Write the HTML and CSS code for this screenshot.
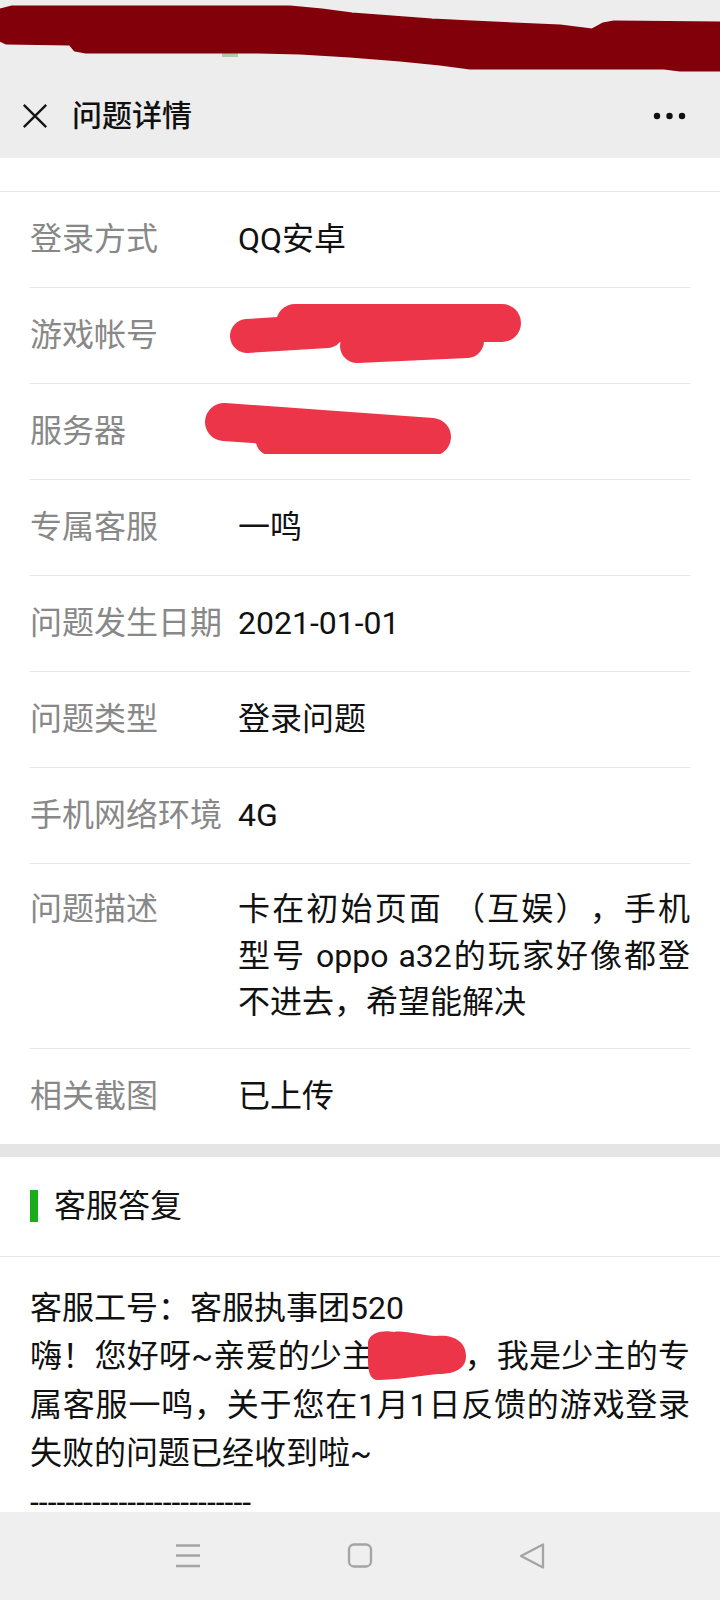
FILE: index.html
```html
<!DOCTYPE html>
<html lang="zh-CN">
<head>
<meta charset="utf-8">
<title>问题详情</title>
<link rel="stylesheet" href="styles.css">
</head>
<body>
<div class="statusbar">
  <svg class="scribble" viewBox="0 0 720 74" width="720" height="74">
    <rect x="222" y="46" width="16" height="11" fill="#a9cda9"/>
    <path d="M0 10 L12 7 L290 7 L322 10 L352 14 L432 20 L472 22 L560 26 L592 30 L603 24 L614 22 L720 23 L720 70 L680 70 L664 68 L470 68 L440 64 L400 60 L350 56 L300 53 L258 52 L86 52 L75 50 L70 44 L6 43 L0 40 Z" fill="#82000a" stroke="#82000a" stroke-width="3" stroke-linejoin="round"/>
  </svg>
</div>
<header class="navbar">
  <svg class="icon-close" viewBox="0 0 26 26" width="26" height="26">
    <path d="M1.8 1.8 L24.2 24.2 M24.2 1.8 L1.8 24.2" stroke="#161616" stroke-width="2.4" fill="none"/>
  </svg>
  <h1 class="navbar-title">问题详情</h1>
  <svg class="icon-more" viewBox="0 0 34 8" width="34" height="8">
    <circle cx="4" cy="4" r="3.2" fill="#111"/>
    <circle cx="16.5" cy="4" r="3.2" fill="#111"/>
    <circle cx="29" cy="4" r="3.2" fill="#111"/>
  </svg>
</header>

<main class="page">
  <div class="top-gap"></div>
  <section class="info-list">
    <div class="row"><div class="label">登录方式</div><div class="value">QQ安卓</div></div>
    <div class="row">
      <div class="label">游戏帐号</div><div class="value"></div>
      <svg class="redact redact-account" viewBox="0 0 340 80" width="340" height="80">
        <g stroke="#ec3548" stroke-linecap="round" fill="none">
          <path d="M22 48 L102 43" stroke-width="34"/>
          <path d="M70 35 L277 35" stroke-width="38"/>
          <path d="M132 58 L242 53" stroke-width="34"/>
        </g>
      </svg>
    </div>
    <div class="row">
      <div class="label">服务器</div><div class="value"></div>
      <svg class="redact redact-server" viewBox="0 0 260 70" width="260" height="70">
        <g stroke="#ec3548" stroke-linecap="round" fill="none">
          <path d="M20 38 L228 53" stroke-width="38"/>
          <path d="M66 57 L226 59" stroke-width="28"/>
        </g>
      </svg>
    </div>
    <div class="row"><div class="label">专属客服</div><div class="value">一鸣</div></div>
    <div class="row"><div class="label">问题发生日期</div><div class="value">2021-01-01</div></div>
    <div class="row"><div class="label">问题类型</div><div class="value">登录问题</div></div>
    <div class="row"><div class="label">手机网络环境</div><div class="value">4G</div></div>
    <div class="row row--multi"><div class="label">问题描述</div><div class="value">卡在初始页面 （互娱），手机型号 oppo a32的玩家好像都登不进去，希望能解决</div></div>
    <div class="row row--last"><div class="label">相关截图</div><div class="value">已上传</div></div>
  </section>

  <div class="band"></div>

  <section class="reply">
    <div class="reply-head"><span class="reply-bar"></span><h2 class="reply-title">客服答复</h2></div>
    <p class="reply-body">客服工号：客服执事团520<br>嗨！您好呀~亲爱的少主<span class="name-slot"><svg class="redact-name" viewBox="0 0 106 56" width="106" height="56"><path d="M4 14 C6 4 20 2 30 4 C40 2 60 8 72 8 C90 6 102 14 102 28 C102 40 92 46 74 46 C56 48 30 52 14 52 C6 52 4 44 4 32 Z" fill="#ec3548"/></svg></span>，我是少主的专属客服一鸣，关于您在1月1日反馈的游戏登录失败的问题已经收到啦~<br>-------------------------</p>
  </section>
</main>

<nav class="sysnav">
  <svg class="sys-icon" viewBox="0 0 26 28" width="26" height="28">
    <path d="M1 3.5 H25 M1 13.5 H25 M1 24 H25" stroke="#a4a4a4" stroke-width="2.4" fill="none"/>
  </svg>
  <svg class="sys-icon" viewBox="0 0 26 28" width="26" height="28">
    <rect x="2" y="2.5" width="22" height="22" rx="5" stroke="#a4a4a4" stroke-width="2.3" fill="none"/>
  </svg>
  <svg class="sys-icon" viewBox="0 0 26 28" width="26" height="28">
    <path d="M2 14 L24 2.5 L24 25.5 Z" stroke="#a4a4a4" stroke-width="2.3" stroke-linejoin="round" fill="none"/>
  </svg>
</nav>
</body>
</html>
```

FILE: styles.css
```css
* { box-sizing: border-box; }

html, body {
  margin: 0;
  padding: 0;
  background: #ffffff;
}

body {
  width: 720px;
  font-family: Roboto, "Noto Sans CJK SC", sans-serif;
  color: #111111;
  text-spacing-trim: space-all;
}

.statusbar {
  height: 74px;
  background: #ededed;
}

.scribble {
  display: block;
}

.navbar {
  height: 84px;
  background: #ededed;
  display: flex;
  align-items: center;
  padding: 0 33px 0 22px;
}

.icon-close {
  flex: none;
  display: block;
}

.navbar-title {
  margin: 0 0 0 24px;
  font-size: 30px;
  font-weight: 500;
  color: #111;
  line-height: 40px;
  flex: 1;
}

.icon-more {
  flex: none;
  display: block;
}

.top-gap {
  height: 34px;
  border-bottom: 1px solid #e7e7e7;
}

.info-list {
  padding: 0 30px;
}

.row {
  position: relative;
  display: flex;
  align-items: flex-start;
  padding: 24px 0;
  border-bottom: 1px solid #e7e7e7;
  font-size: 32px;
  line-height: 47px;
}

.row--multi {
  padding: 22px 0;
  line-height: 46.5px;
}

.row--last {
  border-bottom: none;
}

.label {
  flex: none;
  width: 208px;
  color: #888888;
  white-space: nowrap;
}

.value {
  flex: 1;
  min-width: 0;
  color: #111111;
  text-align: justify;
}

.redact {
  position: absolute;
  display: block;
}

.redact-account {
  left: 195px;
  top: 0;
}

.redact-server {
  left: 174px;
  top: 0;
}

.band {
  height: 13px;
  background: #e5e5e5;
}

.reply-head {
  height: 100px;
  display: flex;
  align-items: center;
  padding: 0 30px;
  border-bottom: 1px solid #e7e7e7;
}

.reply-bar {
  width: 8px;
  height: 32px;
  background: #1aad19;
  margin-right: 16px;
  flex: none;
}

.reply-title {
  margin: 0;
  font-size: 32px;
  font-weight: 400;
  line-height: 40px;
  color: #111;
}

.reply-body {
  margin: 0;
  padding: 27px 30px 120px;
  font-size: 32px;
  line-height: 48.5px;
  text-align: justify;
  color: #111;
}

.name-slot {
  position: relative;
  display: inline-block;
  width: 90px;
  height: 1em;
}

.redact-name {
  position: absolute;
  left: -10px;
  top: -7px;
  display: block;
}

.sysnav {
  position: fixed;
  left: 0;
  right: 0;
  bottom: 0;
  height: 88px;
  background: #efefef;
  display: flex;
  align-items: center;
  justify-content: center;
  gap: 146px;
}

.sys-icon {
  display: block;
  flex: none;
}
```
